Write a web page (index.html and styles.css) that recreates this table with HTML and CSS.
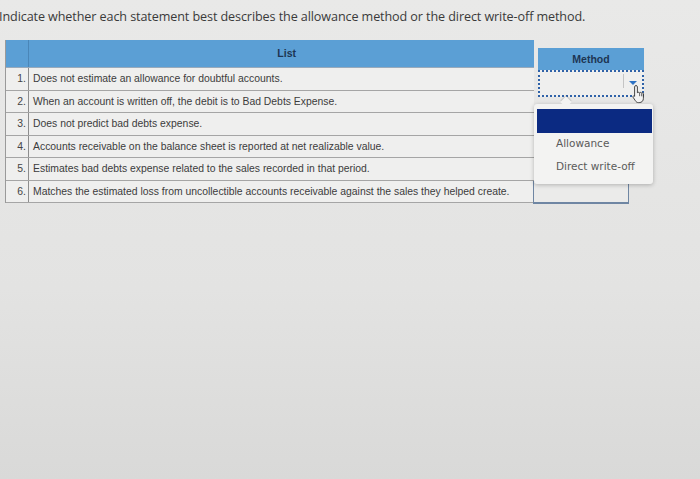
FILE: index.html
```html
<!DOCTYPE html>
<html>
<head>
<meta charset="utf-8">
<link rel="stylesheet" href="styles.css">
</head>
<body>
<div class="page">
  <p class="title">Indicate whether each statement best describes the allowance method or the direct write-off method.</p>
  <div class="board">
    <div class="list">
      <div class="head"><div class="num"></div><div class="label">List</div></div>
      <div class="row"><div class="num">1.</div><div class="text">Does not estimate an allowance for doubtful accounts.</div></div>
      <div class="row"><div class="num">2.</div><div class="text">When an account is written off, the debit is to Bad Debts Expense.</div></div>
      <div class="row"><div class="num">3.</div><div class="text">Does not predict bad debts expense.</div></div>
      <div class="row"><div class="num">4.</div><div class="text">Accounts receivable on the balance sheet is reported at net realizable value.</div></div>
      <div class="row"><div class="num">5.</div><div class="text">Estimates bad debts expense related to the sales recorded in that period.</div></div>
      <div class="row"><div class="num">6.</div><div class="text">Matches the estimated loss from uncollectible accounts receivable against the sales they helped create.</div></div>
    </div>
    <div class="method">
      <div class="mhead">Method</div>
      <div class="select">
        <span class="sep"></span>
        <span class="arrow"></span>
      </div>
      <div class="spacer"></div>
      <div class="mcell"></div>
      <div class="menu">
        <div class="item active"></div>
        <div class="item">Allowance</div>
        <div class="item">Direct write-off</div>
      </div>
      <span class="pointer"></span>
      <svg class="cursor" width="16" height="20" viewBox="0 0 16 20">
        <path d="M5 1.5c.8 0 1.4.6 1.4 1.4v6l.2-.1c.3-.7 1.6-.8 2 0 .4-.6 1.6-.6 2 .2.5-.4 1.7-.2 1.8.8v4.5c0 2.6-1.6 4.3-4.2 4.3H7.5c-1.5 0-2.4-.7-3.2-2L2 13.2c-.5-.9.7-1.8 1.5-1L3.6 12.3V2.9C3.6 2.1 4.2 1.5 5 1.5z" fill="#f4f4f4" stroke="#333" stroke-width="0.9"/>
        <path d="M8.6 9v3.2M10.6 9.3v3M12.3 10v2.4" stroke="#333" stroke-width="0.7" fill="none"/>
      </svg>
    </div>
  </div>
</div>
</body>
</html>
```

FILE: styles.css
```css
html, body {
  margin: 0;
  padding: 0;
}
body {
  width: 700px;
  height: 479px;
  overflow: hidden;
  background: linear-gradient(180deg, #e9e9e8 0%, #e3e3e2 60%, #d9d9d8 100%);
  font-family: "Liberation Sans", Arial, sans-serif;
}
.page {
  padding: 8px 0 0 0;
}
.title {
  margin: 0 0 0 -1px;
  font-family: "Open Sans", "Liberation Sans", sans-serif;
  font-size: 12.6px;
  line-height: 18px;
  color: #3a3a3a;
  letter-spacing: -0.1px;
}
.board {
  display: flex;
  align-items: flex-start;
  margin-top: 14px;
  padding-left: 5px;
  gap: 4px;
}
.list {
  width: 528px;
  border-left: 1px solid #9a9a9a;
}
.head {
  display: flex;
  height: 27px;
  background: #5b9fd5;
  border-bottom: 1px solid #9ab;
}
.head .num {
  width: 22px;
  border-right: 1px solid #4a86b8;
}
.head .label {
  flex: 1;
  text-align: right;
  padding-right: 238px;
  font-size: 10.5px;
  font-weight: bold;
  color: #1d3553;
  line-height: 27px;
}
.row {
  display: flex;
  height: 21.5px;
  background: #efefee;
  border-bottom: 1px solid #a5a5a5;
  font-size: 10.4px;
  color: #3c3c3c;
  line-height: 21.5px;
}
.row .num {
  width: 20px;
  padding-right: 2px;
  text-align: right;
  border-right: 1px solid #8d8d8d;
  color: #444;
}
.row .text {
  padding-left: 4px;
  white-space: nowrap;
}
.method {
  position: relative;
  width: 106px;
  margin-top: 8px;
}
.mhead {
  height: 22px;
  background: #5b9fd5;
  font-size: 10.5px;
  font-weight: bold;
  color: #1d3553;
  line-height: 22px;
  text-align: center;
}
.select {
  position: relative;
  height: 23px;
  background: #efefee;
  border: 2px dotted #2f62a8;
}
.select .sep {
  position: absolute;
  right: 18px;
  top: 2px;
  height: 14px;
  border-left: 1px solid #c4c4c4;
}
.select .arrow {
  position: absolute;
  right: 5px;
  top: 9px;
  width: 0;
  height: 0;
  border-left: 4px solid transparent;
  border-right: 4px solid transparent;
  border-top: 4px solid #2d72c4;
}
.spacer {
  height: 84px;
}
.mcell {
  width: 94px;
  height: 20px;
  margin-left: -5px;
  background: #ebebea;
  border: 1px solid #6f86a3;
  border-bottom-width: 2px;
}
.menu {
  position: absolute;
  left: -4px;
  top: 56px;
  width: 119px;
  height: 80px;
  background: #f3f3f2;
  border-radius: 3px;
  box-shadow: 0 1px 4px rgba(0, 0, 0, 0.25);
  padding-top: 5px;
  box-sizing: border-box;
  font-family: "DejaVu Sans", Verdana, sans-serif;
  font-size: 10.5px;
  color: #5a5a5a;
}
.item {
  height: 23px;
  line-height: 21px;
  padding-left: 22px;
}
.item.active {
  height: 24px;
  margin: 0 1px 0 3px;
  background: #0b2a82;
}
.pointer {
  position: absolute;
  left: 24px;
  top: 50px;
  width: 8px;
  height: 8px;
  background: #f3f3f2;
  transform: rotate(45deg);
  box-shadow: -1px -1px 1px rgba(0, 0, 0, 0.15);
}
.cursor {
  position: absolute;
  left: 93px;
  top: 36px;
}
```
